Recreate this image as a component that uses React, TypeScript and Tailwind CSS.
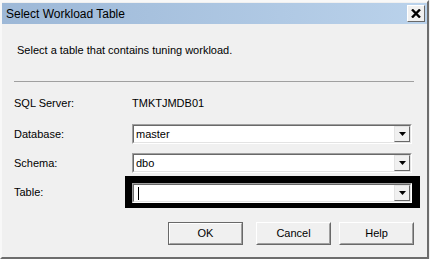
const font = { fontFamily: '"Liberation Sans", Arial, sans-serif' };

const DropArrow = () => (
  <div className="flex h-full w-[16px] shrink-0 items-center justify-center border-t border-l border-r border-b border-t-[#e3e3e3] border-l-[#e3e3e3] border-r-[#696969] border-b-[#696969] bg-[#f0f0f0]">
    <svg width="7" height="4" viewBox="0 0 7 4">
      <polygon points="0,0 7,0 3.5,4" fill="#000" />
    </svg>
  </div>
);

interface IComboProps {
  value?: string;
  caret?: boolean;
}

const Combo = (props: IComboProps) => {
  return (
    <div className="flex h-[20px] w-[280px] border-t border-l border-r border-b border-t-[#a0a0a0] border-l-[#a0a0a0] border-r-white border-b-white">
      <div className="flex flex-1 border-t border-l border-t-[#696969] border-l-[#696969] border-r border-b border-r-[#e3e3e3] border-b-[#e3e3e3] bg-white">
        <div className="flex flex-1 items-center pl-[2px] text-[11px] text-black">
          {props.caret ? <span className="ml-[2px] h-[13px] w-px bg-black" /> : props.value}
        </div>
        <DropArrow />
      </div>
    </div>
  );
};

const Button = ({ label, isDefault }: { label: string; isDefault?: boolean }) => (
  <div
    className={
      isDefault
        ? "flex h-[23px] w-[75px] items-center justify-center border border-[#696969] bg-[#f0f0f0] text-[11px] text-black"
        : "flex h-[23px] w-[75px] items-center justify-center border border-t-white border-l-white border-r-[#696969] border-b-[#696969] bg-[#f0f0f0] text-[11px] text-black"
    }
  >
    <div
      className={
        isDefault
          ? "flex h-full w-full items-center justify-center border border-t-white border-l-white border-r-[#a0a0a0] border-b-[#a0a0a0]"
          : "flex h-full w-full items-center justify-center border border-t-[#f0f0f0] border-l-[#f0f0f0] border-r-[#a0a0a0] border-b-[#a0a0a0]"
      }
    >
      {label}
    </div>
  </div>
);

export default function App() {
  return (
    <div className="h-[259px] w-[430px] bg-[#f0f0f0]" style={font}>
      {/* window frame */}
      <div className="flex h-[259px] w-[429px] flex-col border-t-2 border-l-2 border-t-[#f8f8f8] border-l-[#f8f8f8] border-r-2 border-b-2 border-r-[#6d6d6d] border-b-[#6d6d6d]">
        {/* title bar */}
        <div className="mt-[1px] flex h-[21px] items-center justify-between bg-gradient-to-r from-[#9db8d7] to-[#bad2eb] pl-[4px] pr-[2px]">
          <span className="text-[12px] text-black">Select Workload Table</span>
          <div className="flex h-[17px] w-[18px] items-center justify-center border border-t-white border-l-white border-r-[#696969] border-b-[#696969] bg-[#f0f0f0]">
            <svg width="10" height="9" viewBox="0 0 10 9">
              <path d="M1 0.5 L9 8.5 M9 0.5 L1 8.5" stroke="#000" strokeWidth="2.4" />
            </svg>
          </div>
        </div>

        {/* body */}
        <div className="flex flex-col text-[11px] text-black">
          <div className="mt-[20px] h-[13px] pl-[15px] leading-[13px]">
            Select a table that contains tuning workload.
          </div>
          <div className="mt-[24px] ml-[12px] h-px w-[400px] bg-[#a0a0a0]" />

          <div className="mt-[11px] flex h-[20px] items-center pl-[12px]">
            <span className="w-[118px]">SQL Server:</span>
            <span>TMKTJMDB01</span>
          </div>

          <div className="mt-[11px] flex h-[20px] items-center pl-[12px]">
            <span className="w-[118px]">Database:</span>
            <Combo value="master" />
          </div>

          <div className="mt-[9px] flex h-[20px] items-center pl-[12px]">
            <span className="w-[118px]">Schema:</span>
            <Combo value="dbo" />
          </div>

          <div className="mt-[3px] flex items-center pl-[12px]">
            <span className="w-[111px]">Table:</span>
            <div className="border-t-[7px] border-l-[7px] border-r-[8px] border-b-[5px] border-black">
              <Combo caret />
            </div>
          </div>

          <div className="mt-[14px] flex pl-[166px]">
            <Button label="OK" isDefault />
            <div className="ml-[13px]">
              <Button label="Cancel" />
            </div>
            <div className="ml-[8px]">
              <Button label="Help" />
            </div>
          </div>
        </div>
      </div>
    </div>
  );
}
